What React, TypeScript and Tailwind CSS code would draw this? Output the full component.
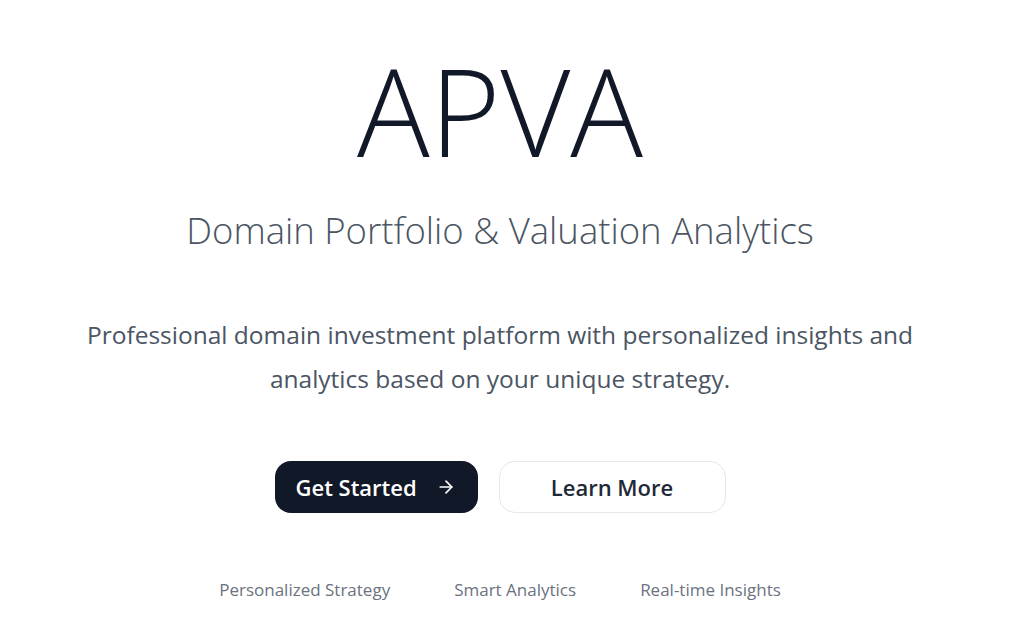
import React from "react";

export default function App() {
  return (
    <div className="min-h-screen w-full bg-white flex flex-col items-center text-center pr-[28px]" style={{ fontFamily: '"Open Sans", "Noto Sans", sans-serif' }}>
      <h1 className="mt-[38px] text-[121px] leading-[144px] font-light text-[#111827]">APVA</h1>
      <h2 className="mt-[24px] text-[36.5px] leading-[48px] font-light text-[#4b5563]">Domain Portfolio &amp; Valuation Analytics</h2>
      <p className="mt-[59px] max-w-[880px] text-[24.5px] leading-[44px] text-[#4b5563]">
        Professional domain investment platform with personalized insights and analytics based on your unique strategy.
      </p>
      <div className="mt-[60px] flex items-center gap-[21px]">
        <button className="w-[203px] h-[52px] pl-[21px] pr-[22px] rounded-2xl bg-[#111827] text-white text-[22px] font-semibold flex items-center justify-between">
          Get Started
          <svg width="20" height="20" viewBox="0 0 24 24" fill="none" stroke="currentColor" strokeWidth="2" strokeLinecap="round" strokeLinejoin="round"><path d="M5 12h14" /><path d="m12 5 7 7-7 7" /></svg>
        </button>
        <button className="w-[227px] h-[52px] rounded-2xl bg-white border border-[#e5e7eb] text-[#1f2937] text-[22px] font-semibold flex items-center justify-center">
          Learn More
        </button>
      </div>
      <div className="mt-[64px] flex items-center gap-16 text-[17px] text-[#6b7280]">
        <span>Personalized Strategy</span>
        <span>Smart Analytics</span>
        <span>Real-time Insights</span>
      </div>
    </div>
  );
}
